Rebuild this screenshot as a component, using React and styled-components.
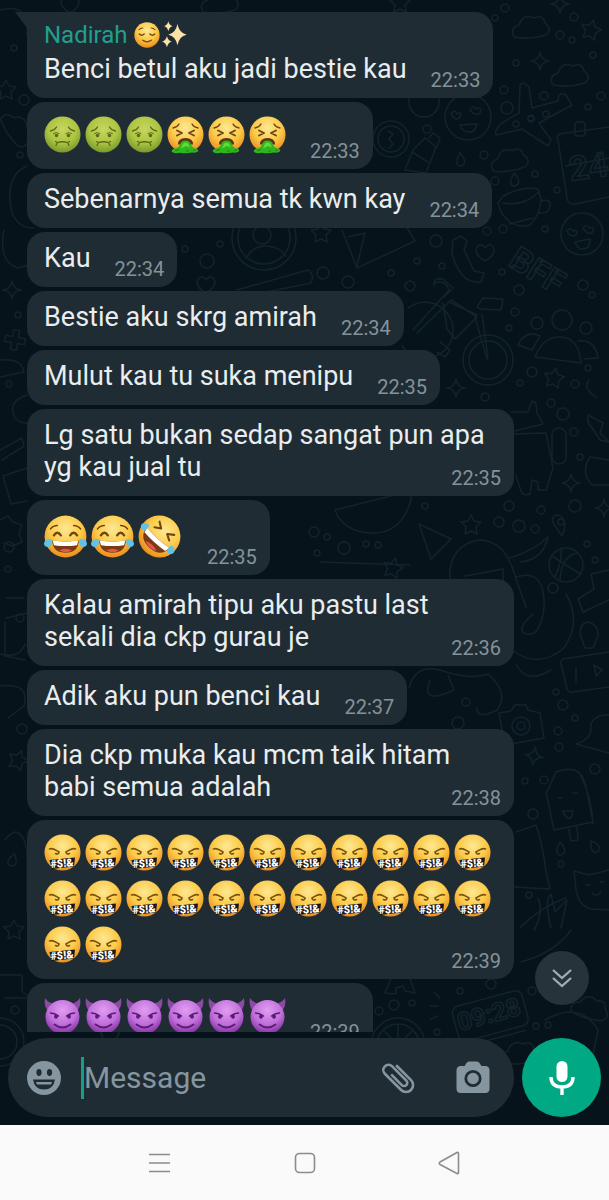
import React from 'react'
import styled, { createGlobalStyle } from 'styled-components';

const messages = [
    { id: 1, sender: 'Nadirah', text: 'Benci betul aku jadi bestie kau', time: '22:33' },
    { id: 2, emojis: ['sick', 'sick', 'sick', 'vomit', 'vomit', 'vomit'], time: '22:33' },
    { id: 3, text: 'Sebenarnya semua tk kwn kay', time: '22:34' },
    { id: 4, text: 'Kau', time: '22:34' },
    { id: 5, text: 'Bestie aku skrg amirah', time: '22:34' },
    { id: 6, text: 'Mulut kau tu suka menipu', time: '22:35' },
    { id: 7, text: 'Lg satu bukan sedap sangat pun apa yg kau jual tu', time: '22:35' },
    { id: 8, emojis: ['joy', 'joy', 'rofl'], large: true, time: '22:35' },
    { id: 9, text: 'Kalau amirah tipu aku pastu last sekali dia ckp gurau je', time: '22:36' },
    { id: 10, text: 'Adik aku pun benci kau', time: '22:37' },
    { id: 11, text: 'Dia ckp muka kau mcm taik hitam babi semua adalah', time: '22:38' },
    { id: 12, emojis: Array(24).fill('swear'), time: '22:39' },
    { id: 13, emojis: Array(6).fill('devil'), time: '22:39' },
]

const faces = {
    sick: {
        label: 'nauseated face',
        art: (
            <>
                <circle cx="18.5" cy="18.5" r="18" fill="url(#green)" />
                <g fill="none" stroke="#5b6a12" strokeWidth="1.3" strokeLinecap="round">
                    <path d="M6.500 15q4-.5 6-4M24.500 11q2 3.500 6 4" />
                    <path d="M12 29.500l1.500-3q5-1.500 10 0l1.500 3M13.500 26.500l-2-1M23.500 26.500l2-1" />
                    <path d="M9.500 17.500q3-2 5.500 0M22 17.500q3-2 5.500 0" strokeWidth="1" />
                </g>
                <circle cx="12.500" cy="19.500" r="1.800" fill="#5b6a12" />
                <circle cx="24.500" cy="19.500" r="1.800" fill="#5b6a12" />
            </>
        ),
    },
    vomit: {
        label: 'face vomiting',
        art: (
            <>
                <circle cx="18.5" cy="18.5" r="18" fill="url(#yellow)" />
                <g fill="none" stroke="#6b4310" strokeWidth="1.9" strokeLinecap="round" strokeLinejoin="round">
                    <path d="M6 12q4-.5 6-4M25 8q2 3.500 6 4" strokeWidth="1.400" />
                    <path d="M10 14.500l5 2.500-5 2.500M27 14.500l-5 2.500 5 2.500" />
                </g>
                <path d="M11 28.500q0-6.500 7.500-6.500t7.500 6.500z" fill="#5c3310" />
                <path d="M13 28.500q1-4 5.500-4t5.500 4q1 3 6 4.500 2.500 1.500 0 3-2 1-5 .5-6 1.500-12 .3-5 1-7.500-.5-2-1.800 1-3.300 5.500-1 6.500-4.500z" fill="#2fb51d" />
                <path d="M16 27.500q2.500-2 5 0l2 4-4-1.500-5 2.500z" fill="#5fdc3a" />
                <path d="M8 34.500l4-1M26 34.500l3-.5M19 35h3" stroke="#178a10" strokeWidth="1" />
            </>
        ),
    },
    joy: {
        label: 'face with tears of joy',
        art: (
            <>
                <circle cx="18.5" cy="18.5" r="18" fill="url(#yellow)" />
                <g fill="none" stroke="#70450c" strokeWidth="1.600" strokeLinecap="round">
                    <path d="M8.500 17.500q3-4.500 6 0M22.500 17.500q3-4.500 6 0" strokeWidth="2" />
                    <path d="M5.500 12q2.500-3 6-3M31.500 12q-2.500-3-6-3" strokeWidth="1.200" />
                </g>
                <path d="M7 22q11.500 2 23 0-.5 10.500-11.500 10.500T7 22z" fill="#7a3a12" />
                <path d="M7.500 22q11 2 22 0l-1 4q-10 1.500-20 0z" fill="#fff" />
                <path d="M13 30.500q5.500-3 11 0-5 3-11 0z" fill="#e4574f" />
                <path d="M6.500 20.500q1 6.500-3 7-3.500 0-3.500-3 .5-3.500 6.500-4zM30.500 20.500q-1 6.500 3 7 3.500 0 3.500-3-.5-3.500-6.500-4z" fill="#5fc3e8" />
            </>
        ),
    },
    rofl: {
        label: 'rolling on the floor laughing',
        art: (
            <g transform="rotate(42 18.5 18.5)">
                <circle cx="18.5" cy="18.5" r="18" fill="url(#yellow)" />
                <g fill="none" stroke="#70450c" strokeWidth="1.800" strokeLinecap="round" strokeLinejoin="round">
                    <path d="M10 9l5 3.500-5 3M27 9l-5 3.500 5 3" />
                </g>
                <path d="M5 20q13.500 2 27 0-1 11.500-13.500 11.500T5 20z" fill="#7a3a12" />
                <path d="M5.500 20q13 2 26 0l-1 4.500q-12 1.500-24 0z" fill="#fff" />
                <path d="M12 29.500q6.500-3 13 0-6 3-13 0z" fill="#e4574f" />
                <path d="M5.500 17q2 6-1.500 7-3.500 0-4-3 0-3.500 5.500-4zM31.500 17q-2 6 1.500 7 3.500 0 4-3 0-3.500-5.500-4z" fill="#5fc3e8" />
            </g>
        ),
    },
    swear: {
        label: 'face with symbols on mouth',
        art: (
            <>
                <circle cx="18.5" cy="18.5" r="18" fill="url(#yellow)" />
                <g fill="none" stroke="#7a5208" strokeWidth="1.600" strokeLinecap="round">
                    <path d="M5.500 15q2-1 5 .5t4.500 2.500q-.5 3-3.500 1.500M31.500 15q-2-1-5 .5T22 18q.5 3 3.500 1.500" />
                </g>
                <path d="M5.500 26l25.500-2.500-1 9L7.500 35z" fill="#17161c" />
                <text x="18" y="33" textAnchor="middle" fill="#fff" fontFamily="Roboto, sans-serif" fontWeight="900" fontSize="11" transform="rotate(-5 18.5 30)">#$!&amp;</text>
            </>
        ),
    },
    devil: {
        label: 'smiling face with horns',
        art: (
            <>
                <path d="M1 1q-1.500 8 3 13l7-7Q4 6 1 1zM36 1q1.500 8-3 13l-7-7q7-1 10-6z" fill="#8b4aa3" />
                <circle cx="18.5" cy="20" r="17" fill="url(#purple)" />
                <g fill="none" stroke="#5b1a73" strokeWidth="1.500" strokeLinecap="round">
                    <path d="M6.500 16q4 0 8 3M30.500 16q-4 0-8 3" />
                    <path d="M10.500 27.500q8 6 16 0" strokeWidth="1.800" />
                </g>
                <ellipse cx="12" cy="19.500" rx="1.900" ry="2.300" fill="#5b1a73" />
                <ellipse cx="25" cy="19.500" rx="1.900" ry="2.300" fill="#5b1a73" />
            </>
        ),
    },
    relieved: {
        label: 'relieved face',
        art: (
            <>
                <circle cx="18.5" cy="18.5" r="18" fill="url(#yellow)" />
                <g fill="none" stroke="#70450c" strokeWidth="2" strokeLinecap="round">
                    <path d="M7.500 17q3 3.500 7 0M22.500 17q4 3.500 7 0" />
                    <path d="M7 11q2-2.500 5.500-2.500M30 11q-2-2.500-5.500-2.500" strokeWidth="1.500" />
                    <path d="M12.500 26q6 4.500 12 0" />
                </g>
            </>
        ),
    },
    sparkles: {
        label: 'sparkles',
        art: (
            <g fill="#fbe3a6">
                <path d="M22 3q2.500 13 13 15-10.500 2-13 15-2.500-13-13-15 10.500-2 13-15z" />
                <path d="M9-1q1.500 6 6 7-4.500 1-6 7-1.500-6-6-7 4.500-1 6-7z" />
                <path d="M7 20q1.500 7 7 8-5.500 1-7 8-1.500-7-7-8 5.500-1 7-8z" />
            </g>
        ),
    },
}

const shapes = {
    star: 'M0-10l3 6 7 1-5 5 1 7-6-3-6 3 1-7-5-5 7-1z',
    sparkle: 'M0-9q1 8 9 9-8 1-9 9-1-8-9-9 8-1 9-9z',
    heart: 'M0 9q-12-7-8-14 5-5 8 1 4-6 8-1 4 7-8 14z',
    cloud: 'M-17 8q-5-9 5-12 4-12 15-7 9-4 11 5 8 6 1 12-16 5-32 2z',
    drop: 'M0-7q9 10 1 13-8 0-1-13z',
    cross: 'M-3-10h6v7h7v6H3v7h-6V3h-7v-6h7z',
}

// shape, x, y, rotation
const doodles = [
    ['cloud', 531, 29, 0], ['star', 591, 30, 15], ['sparkle', 540, 61, 0], ['cloud', 570, 77, 0],
    ['cloud', 510, 162, -5], ['drop', 460, 160, 0], ['drop', 514, 180, 0], ['heart', 485, 252, 0],
    ['star', 321, 233, 0], ['sparkle', 456, 388, 0], ['star', 554, 378, 10], ['cross', 15, 340, 10],
    ['sparkle', 12, 290, 0], ['star', 6, 90, 0], ['sparkle', 571, 483, 0], ['star', 471, 525, 0],
    ['star', 393, 568, 15], ['sparkle', 604, 508, 0], ['sparkle', 534, 756, 10], ['drop', 560, 849, 0],
    ['drop', 594, 847, -30], ['heart', 206, 284, 0], ['cloud', 16, 130, 60],
    ['star', 18, 760, 20], ['sparkle', 560, 4, 0], ['cloud', 520, 1055, 0],
    ['heart', 110, 1034, 0], ['cloud', 590, 1010, 20], ['star', 14, 930, 0], ['drop', 12, 860, 20],
    ['cloud', 220, 4, 0], ['heart', 70, 4, 0], ['star', 400, 3, 0],
]

const dots = [
    [24, 100, 5], [14, 48, 3], [20, 155, 3], [495, 18, 3], [505, 8, 4], [560, 35, 4], [572, 40, 3], [574, 17, 4],
    [593, 55, 3], [516, 63, 3], [504, 90, 4], [544, 96, 4], [507, 108, 6], [588, 107, 3], [601, 96, 4], [531, 119, 3],
    [546, 114, 3], [427, 129, 4], [484, 155, 4], [535, 174, 3], [495, 181, 4], [557, 190, 3], [487, 231, 4],
    [503, 229, 4], [545, 229, 3], [436, 241, 6], [391, 273, 3], [410, 286, 5], [417, 261, 3], [442, 266, 3],
    [323, 273, 6], [348, 282, 6], [207, 261, 7], [185, 249, 3], [220, 244, 3], [502, 272, 3], [519, 290, 5],
    [583, 285, 5], [592, 295, 3], [515, 312, 4], [509, 328, 3], [532, 372, 5], [520, 383, 3], [575, 384, 4],
    [588, 368, 3], [485, 397, 4], [551, 403, 4], [563, 414, 6], [574, 432, 4], [580, 457, 3], [541, 510, 4],
    [509, 506, 5], [575, 506, 6], [499, 522, 5], [519, 526, 6], [535, 529, 4], [425, 506, 3], [344, 548, 6],
    [314, 532, 5], [327, 537, 3], [317, 553, 3], [366, 544, 3], [378, 545, 3], [587, 544, 3], [595, 560, 3],
    [553, 588, 5], [556, 692, 3], [563, 705, 5], [558, 731, 4], [575, 718, 3], [559, 747, 4], [595, 769, 5],
    [525, 781, 3], [544, 780, 4], [533, 814, 5], [561, 864, 3], [529, 895, 3], [466, 702, 4], [458, 723, 6],
    [9, 547, 5], [8, 569, 3], [18, 315, 3], [9, 384, 3], [22, 729, 5], [15, 1010, 4], [379, 1011, 4], [394, 1005, 5],
    [412, 1003, 3], [460, 991, 3], [491, 984, 5], [532, 991, 4], [536, 1026, 3], [548, 1025, 3], [437, 1032, 3],
]

const GlobalStyle = createGlobalStyle`
    body {
        margin: 0;
        background: #06131a;
        font-family: Roboto, "Liberation Sans", sans-serif;
    }
    * {
        box-sizing: border-box;
    }
`

function Wallpaper() {
    return (
        <WallpaperSvg viewBox="0 0 609 1125" preserveAspectRatio="xMaxYMin slice" aria-hidden="true">
            <defs>
                <radialGradient id="yellow" cx=".5" cy=".32" r=".68">
                    <stop offset="0" stopColor="#fde894" />
                    <stop offset=".55" stopColor="#fccb4a" />
                    <stop offset="1" stopColor="#ea8c1c" />
                </radialGradient>
                <radialGradient id="green" cx=".5" cy=".35" r=".65">
                    <stop offset="0" stopColor="#c6d660" />
                    <stop offset=".6" stopColor="#adc443" />
                    <stop offset="1" stopColor="#78992a" />
                </radialGradient>
                <radialGradient id="purple" cx=".5" cy=".3" r=".7">
                    <stop offset="0" stopColor="#e29cf2" />
                    <stop offset=".6" stopColor="#c06fda" />
                    <stop offset="1" stopColor="#8330a3" />
                </radialGradient>
            </defs>
            <g fill="none" stroke="#14232b" strokeWidth="1.500" strokeLinecap="round" strokeLinejoin="round">
                {dots.map(([x, y, r]) => <circle key={`${x}-${y}`} cx={x} cy={y} r={r} />)}
                {doodles.map(([shape, x, y, turn]) => (
                    <path key={`${x}-${y}`} d={shapes[shape]} transform={`translate(${x} ${y}) rotate(${turn})`} />
                ))}
                {/* faces and coins */}
                <circle cx="468" cy="117" r="23" />
                <path d="M451 114q4-6 6 0 6-3 3 3-4 5-9-3zM470 110q3-6 6-1 6-3 4 4-5 4-10-3zM460 125l17-1q-2 9-9 8t-8-7z" />
                <circle cx="582" cy="234" r="21" />
                <path d="M567 231q4-5 6 0 6-2 3 4-6 3-9-4zM583 228q4-5 6 0 6-2 4 4-5 4-10-4zM575 242l15-3q0 9-6 10t-9-7z" />
                <circle cx="391" cy="139" r="18" /><circle cx="391" cy="139" r="13" /><path d="M388 131l5 3-4 5 4 5-4 4" />
                <circle cx="424" cy="102" r="15" />
                <circle cx="264" cy="238" r="32" /><circle cx="264" cy="238" r="26" /><circle cx="262" cy="235" r="9" />
                <path d="M246 258q8-13 21-12t19 10" />
                {/* plane, calendar, cup */}
                <path d="M519 113l1-27q2-6 9 1l3 21 26-7q0-10 8-6l6 10-33 18 12 17-3 6-26-17-26 6q-2-5 6-12z" />
                <circle cx="516" cy="124" r="3" /><circle cx="531" cy="118" r="3" />
                <path d="M609 127l-50 7q-3 2-1 6l9 58q1 7 8 6l34-7M566 166l43-8" />
                <rect x="575" y="122" width="10" height="14" rx="3" />
                <path d="M498 203l5-7q20-10 35-7l3 10q-1 17-11 26-12 3-20-3-10-8-12-19zM503 203q20 4 36-11M541 201q10-3 9 5t-11 7M509 224l24-6" />
                <path d="M425 138l11 9-10 26-21-3 8-20zM429 138l4-5 7 5-3 9M412 152l16 10" />
                <path d="M342 230l15 38 58-27-9-15M348 237l17-4-8 33" />
                <path d="M453 240l8-4 6 5-3 9 10 21 10 2-3 9q-20 3-29-28z" />
                <path d="M237 290l71-20q7 5 3 13l-70 14" />
                {/* bicycle */}
                <circle cx="488" cy="360" r="25" /><circle cx="488" cy="360" r="19" />
                <path d="M402 346a28 28 0 1 0 6-38M413 330l36-40q-4-11-14-7M417 333l34-33 26 17-22 22-8-10-4-26M449 302l28 13M475 317l12 42M482 314l6 44M477 307l6-9 20 1-2 11-20-1zM434 286q-1-9 9-7l10 9-9 9M440 342l10 8-5 7-8-5" />
                <circle cx="562" cy="320" r="10" /><circle cx="537" cy="323" r="6" /><circle cx="586" cy="328" r="6" />
                <path d="M535 357q8-21 26-20t20 26zM518 345q8-16 22-9l-8 14zM578 341q17-2 20 17l-14 1" />
                {/* robot */}
                <path d="M511 412h17l4-11 4 2 1 10 6 11-33 8M514 434l32-1 7 35-7 22h-8v-8l-6-2-2 14q-8 3-10-6l-4-12" />
                <rect x="552" y="428" width="14" height="36" rx="7" />
                <path d="M588 415l15 8-3 10 9 9-9-2-12-18zM597 398q-15-10-8-18M609 460l-19-3q-10 15 2 28h17" />
                <path d="M419 524l32 15-20 20zM335 510l56-14q22-5 20 4-10 34-39 33t-37-23zM320 562l90 3" />
                <path d="M450 579q-2-33 29-39 27 0 37 39l10 28M465 576l38-7v14M510 558q25-8 38-21-5 23-28 25" />
                <circle cx="566" cy="565" r="17" /><path d="M552 556l28 18M555 577q8-18 6-29M578 553q-17 2-18 28" />
                <path d="M557 515q10 2 7 15l-2 6-9-13q-2-7 4-8z" /><circle cx="561" cy="522" r="3" />
                {/* octopus, notes, camera, bell */}
                <path d="M516 577q30-9 28 31-4 29-17 26t6-20M566 594q16 27-2 54-26 22-52 2M516 664q10 21 35 6M409 688q7-26 34-17t45 3q22 19 9 36-20 10-20-2M430 680q-10 26 24 10l-6-15" />
                <path d="M609 652l-46 7q-3 2-2 5l6 25q2 4 6 3l36-5M576 668v14M594 665l8 5-6 6z" />
                <path d="M587 622q12 2 11 14l-5 12-8 0-5-14q0-10 7-12zM609 570l-18 4 3 15-16 10 5 13 26-12" />
                <path d="M499 713l12-2 4-6h11l2 5 12 3 4 25-39 7z" /><circle cx="521" cy="726" r="9" /><circle cx="521" cy="726" r="4" />
                <path d="M576 744q17-5 15-20 4-10 18-9M576 744l33 9" />
                {/* ice cream, cat, plants */}
                <path d="M546 794l10-22q25-10 30 15l7 35-39 8-8-38M579 772q13 25 14 52M569 829l2 12 7-1-1-13M563 811h10q-1 9-5 7t-5-7M558 798h4M573 793h4" />
                <path d="M609 870l-20 5-15-4 2 19q3 16 15 19l18 1M586 885h4M600 882h4M592 893q5 5 9-1" />
                <path d="M516 832l20-7q7 20 10 47l4 17-36-2M520 928q20-21 46-30M534 930q10-16 4-32M551 928q-7-28 0-34l4 18 12-12-6 28" />
                {/* clock, fruit */}
                <g transform="rotate(-15 490 1015)">
                    <rect x="454" y="998" width="72" height="36" rx="7" />
                    <path d="M462 1039h58" />
                </g>
                <circle cx="398" cy="1045" r="27" /><circle cx="398" cy="1045" r="21" /><path d="M398 1045v-20M398 1045l-14-14M398 1045l14-14" />
                <path d="M385 993l7-17 16-3 7 20-10-2-2-5-7 2v6zM440 998l-6-6M438 1006h-8M438 1016l-7 3M521 962q35-10 50-32M545 1020q35-20 53 10l-10 50" />
                {/* left edge */}
                <path d="M0 10q30-8 27 25M27 166q-19 8-17 35t24 27M4 230q-6 32 14 38l10-3M0 360q22-2 24 12l-24 5M27 395q-16 5-14 17t16 11M0 450l22-12 2 8L2 460" />
                <path d="M27 468l-24 8 8 28 16-3M0 520l8-4 5 6 9 3-3 9 3 8-10 4-8-3M6 598h18M6 618l22-5M5 622v34l20 4M0 654q20 5 25-10M0 686q30-4 24 20l-16 12" />
                <circle cx="20" cy="618" r="4" /><circle cx="0" cy="1042" r="24" /><circle cx="0" cy="1042" r="17" />
                <path d="M0 975h22v16l8 7H5M5 840q15-20 22 10v60" />
            </g>
            <g fill="none" stroke="#14232b" strokeWidth="1.500" fontFamily="Roboto, sans-serif" fontWeight="700">
                <text x="571" y="181" fontSize="34" transform="rotate(-8 571 181)">24</text>
                <text x="507" y="265" fontSize="33" transform="rotate(32 507 265)">BFF</text>
                <text x="460" y="1031" fontSize="25" transform="rotate(-15 460 1031)">09:28</text>
            </g>
        </WallpaperSvg>
    )
}

function Emoji({ name, size }) {
    const face = faces[name]
    return (
        <EmojiSvg $size={size} viewBox="0 0 37 37" role="img" aria-label={face.label}>
            {face.art}
        </EmojiSvg>
    )
}

function Message({ message }) {
    const { sender, text, emojis, large, time } = message
    const kind = emojis ? (large ? 'large' : 'emoji') : 'text'
    return (
        <Bubble $first={Boolean(sender)}>
            {sender &&
                <Sender>
                    {sender}
                    <SenderEmojis>
                        <Emoji name="relieved" size="small" />
                        <Emoji name="sparkles" size="small" />
                    </SenderEmojis>
                </Sender>
            }
            {text}
            {emojis && emojis.map((name, i) => <Emoji key={i} name={name} size={kind} />)}
            <Time $kind={kind}>{time}</Time>
        </Bubble>
    )
}

export default function App() {
    return (
        <Screen>
            <GlobalStyle />
            <Chat>
                <Wallpaper />
                <History>
                    <Messages>
                        {messages.map(message => <Message key={message.id} message={message} />)}
                    </Messages>
                    <ScrollButton type="button" aria-label="Scroll to latest">
                        <svg width="22" height="22" viewBox="0 0 22 22" fill="none" stroke="#a3adb3" strokeWidth="2.200">
                            <path d="M2 3l9 8 9-8M2 11l9 8 9-8" />
                        </svg>
                    </ScrollButton>
                </History>
                <Composer>
                    <InputPill>
                        <IconButton type="button" aria-label="Emoji">
                            <svg width="36" height="36" viewBox="0 0 36 36">
                                <circle cx="18" cy="18" r="17" fill="#8696a0" />
                                <ellipse cx="13" cy="12.500" rx="2.600" ry="3.400" fill="#202c33" />
                                <ellipse cx="23.500" cy="12.500" rx="2.600" ry="3.400" fill="#202c33" />
                                <path d="M7 19.500h22q-1.500 10-11 10t-11-10z" fill="#202c33" />
                                <path d="M10 22h16l-1 2.500H11z" fill="#8696a0" />
                            </svg>
                        </IconButton>
                        <Caret />
                        <TextInput type="text" placeholder="Message" aria-label="Message" />
                        <IconButton type="button" aria-label="Attach">
                            <svg width="38" height="38" viewBox="0 0 38 38" fill="none" stroke="#8696a0" strokeWidth="2.600" strokeLinecap="round">
                                <g transform="rotate(-45 19 19)">
                                    <path d="M26 9v20a7 7 0 0 1-14 0V6a5.200 5.200 0 0 1 10.400 0v20a3.200 3.200 0 0 1-6.400 0V12" />
                                </g>
                            </svg>
                        </IconButton>
                        <IconButton type="button" aria-label="Camera">
                            <svg width="36" height="36" viewBox="0 0 36 36">
                                <path d="M14 1.500h8q1.500 0 2.500 1.500l2 3H30q4.500 0 4.500 4.500v18Q34.500 33 30 33H6q-4.500 0-4.500-4.500v-18Q1.500 6 6 6h3.500l2-3q1-1.500 2.500-1.500z" fill="#8696a0" />
                                <circle cx="18" cy="18.500" r="7.200" fill="none" stroke="#202c33" strokeWidth="2.800" />
                            </svg>
                        </IconButton>
                    </InputPill>
                    <MicButton type="button" aria-label="Record voice message">
                        <svg width="30" height="38" viewBox="0 0 30 38">
                            <rect x="9.500" y="2" width="11" height="21" rx="5.500" fill="#fff" />
                            <path d="M4 18q0 10 11 10t11-10M15 28v8" fill="none" stroke="#fff" strokeWidth="3.400" />
                        </svg>
                    </MicButton>
                </Composer>
            </Chat>
            <SystemNav>
                <NavButton type="button" aria-label="Recent apps">
                    <svg width="24" height="24" viewBox="0 0 24 24" stroke="#8c8c8c" strokeWidth="1.600">
                        <path d="M1 3.500h21M1 12h21M1 20.500h21" />
                    </svg>
                </NavButton>
                <NavButton type="button" aria-label="Home">
                    <svg width="24" height="24" viewBox="0 0 24 24" fill="none" stroke="#8c8c8c" strokeWidth="1.600">
                        <rect x="2.500" y="2.500" width="19" height="19" rx="4" />
                    </svg>
                </NavButton>
                <NavButton type="button" aria-label="Back">
                    <svg width="24" height="24" viewBox="0 0 24 24" fill="none" stroke="#8c8c8c" strokeWidth="1.600" strokeLinejoin="round">
                        <path d="M2 11L19 1.500q1.500-.5 1.500 1v19q0 1.500-1.500 1L2 13.500q-1.500-1.200 0-2.500z" />
                    </svg>
                </NavButton>
            </SystemNav>
        </Screen>
    )
}

const Screen = styled.div`
    display: flex;
    flex-direction: column;
    height: 100vh;
`
const Chat = styled.main`
    position: relative;
    flex: 1;
    min-height: 0;
    display: flex;
    flex-direction: column;
    background: #06131a;
`
const WallpaperSvg = styled.svg`
    position: absolute;
    inset: 0;
    width: 100%;
    height: 100%;
`
const History = styled.div`
    position: relative;
    flex: 1;
    min-height: 0;
    display: flex;
`
const Messages = styled.div`
    flex: 1;
    display: flex;
    flex-direction: column;
    align-items: flex-start;
    gap: 4px;
    padding: 12px 95px 0 27px;
    overflow-y: auto;
    scrollbar-width: none;
`
const Bubble = styled.div`
    position: relative;
    flex: none;
    display: flow-root;
    padding: 10px 13px 6px 17px;
    border-radius: ${props => props.$first ? '0 18px 18px 18px' : '18px'};
    background: #202c33;
    color: #e9edef;
    font-size: 27px;
    line-height: 32px;

    &::before {
        content: ${props => props.$first ? '""' : 'none'};
        position: absolute;
        top: 0;
        left: -12px;
        border-top: 16px solid #202c33;
        border-left: 12px solid transparent;
    }
`
const Sender = styled.div`
    display: flex;
    align-items: center;
    margin-bottom: 5px;
    color: #1fa08f;
    font-size: 24px;
    line-height: 26px;
`
const SenderEmojis = styled.span`
    display: flex;
    margin-left: 7px;
`
const emojiSizes = {
    small: { size: 26, margin: '0 2px 0 0' },
    emoji: { size: 37, margin: '4px 4px 5px 0' },
    large: { size: 43, margin: '5px 4px 6px 0' },
}
const EmojiSvg = styled.svg`
    width: ${props => emojiSizes[props.$size].size}px;
    height: ${props => emojiSizes[props.$size].size}px;
    margin: ${props => emojiSizes[props.$size].margin};
    vertical-align: top;
    overflow: visible;
`
const timeOffsets = {
    text: '15px 0 0 24px',
    emoji: '27px 0 0 20px',
    large: '35px 0 0 22px',
}
const Time = styled.time`
    float: right;
    margin: ${props => timeOffsets[props.$kind]};
    color: #84929a;
    font-size: 20px;
    line-height: 24px;
`
const ScrollButton = styled.button`
    position: absolute;
    right: 20px;
    bottom: 27px;
    display: grid;
    place-items: center;
    width: 54px;
    height: 54px;
    padding: 0;
    border: 0;
    border-radius: 50%;
    background: #27333a;
`
const Composer = styled.div`
    position: relative;
    display: flex;
    align-items: center;
    gap: 8px;
    padding: 6px 8px 8px;
`
const InputPill = styled.div`
    flex: 1;
    min-width: 0;
    display: flex;
    align-items: center;
    height: 79px;
    padding: 0 23px 0 18px;
    border-radius: 40px;
    background: #202c33;
`
const IconButton = styled.button`
    flex: none;
    display: grid;
    place-items: center;
    padding: 0;
    border: 0;
    background: none;

    & + & {
        margin-left: 37px;
    }
`
const Caret = styled.span`
    flex: none;
    width: 3px;
    height: 42px;
    margin-left: 19px;
    background: #12a184;
`
const TextInput = styled.input`
    flex: 1;
    min-width: 0;
    padding: 0;
    border: 0;
    outline: 0;
    background: none;
    color: #e9edef;
    font-family: inherit;
    font-size: 30px;
    line-height: 40px;

    &::placeholder {
        color: #8696a0;
        opacity: 1;
    }
`
const MicButton = styled.button`
    flex: none;
    display: grid;
    place-items: center;
    width: 79px;
    height: 79px;
    padding: 0;
    border: 0;
    border-radius: 50%;
    background: #00a884;
`
const SystemNav = styled.nav`
    display: flex;
    justify-content: center;
    gap: 121px;
    padding: 26px 0 25px;
    background: #fafafa;
`
const NavButton = styled.button`
    display: grid;
    padding: 0;
    border: 0;
    background: none;
`
